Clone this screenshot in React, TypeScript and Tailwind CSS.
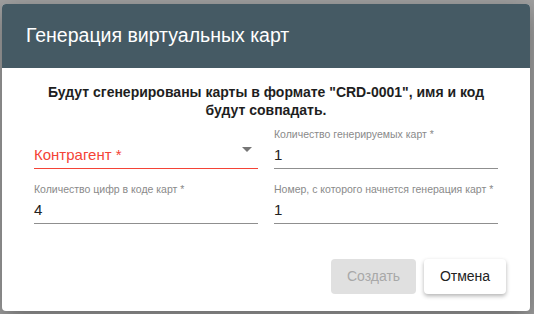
import React from "react";

function TextField({ label, value }: { label: string; value: string }) {
  return (
    <div className="flex flex-col">
      <div className="h-[16px] text-[10.5px] leading-[16px] text-[#8a8a8a] whitespace-nowrap">{label}</div>
      <div className="h-[26px] text-[15px] leading-[26px] text-[#222]">{value}</div>
      <div className="h-px bg-[#8f8f8f]" />
    </div>
  );
}

function SelectField({ label }: { label: string }) {
  return (
    <div className="flex flex-col">
      <div className="h-[16px]" />
      <div className="flex h-[26px] items-center justify-between">
        <span className="text-[15px] text-[#f44336]">{label}</span>
        <svg width="10" height="5" viewBox="0 0 10 5" className="mr-[6px] mb-[12px]">
          <path d="M0 0 L10 0 L5 5 Z" fill="#767676" />
        </svg>
      </div>
      <div className="h-px bg-[#f44336]" />
    </div>
  );
}

export default function App() {
  return (
    <div
      className="w-[534px] h-[314px] bg-[#a0a0a0] pt-[4px] pl-[2px] overflow-hidden"
      style={{ fontFamily: '"Liberation Sans", Arial, sans-serif' }}
    >
      <div className="w-[528px] h-[307px] bg-white rounded-[4px] shadow-[0_8px_24px_rgba(0,0,0,0.35)] flex flex-col overflow-hidden">
        <div className="h-[64px] bg-[#455a64] flex items-center px-[24px] shrink-0">
          <span className="text-[19.5px] text-white">Генерация виртуальных карт</span>
        </div>
        <div className="flex flex-col flex-1 px-[32px]">
          <div className="pt-[15px] text-center text-[14px] font-bold leading-[18px] text-[#1e1e1e] whitespace-nowrap">
            Будут сгенерированы карты в формате "CRD-0001", имя и код
            <br />
            будут совпадать.
          </div>
          <div className="grid grid-cols-2 gap-x-[16px] gap-y-[12px] mt-[7px]">
            <SelectField label="Контрагент *" />
            <TextField label="Количество генерируемых карт *" value="1" />
            <TextField label="Количество цифр в коде карт *" value="4" />
            <TextField label="Номер, с которого начнется генерация карт *" value="1" />
          </div>
          <div className="flex-1" />
          <div className="flex justify-end gap-[8px] -mr-[8px] mb-[17px]">
            <button className="w-[85px] h-[35px] rounded-[4px] bg-[#e0e0e0] text-[14px] text-[#a8a8a8]">
              Создать
            </button>
            <button className="w-[82px] h-[35px] rounded-[4px] bg-white text-[14px] text-[#222] shadow-[0_2px_4px_rgba(0,0,0,0.3)]">
              Отмена
            </button>
          </div>
        </div>
      </div>
    </div>
  );
}
